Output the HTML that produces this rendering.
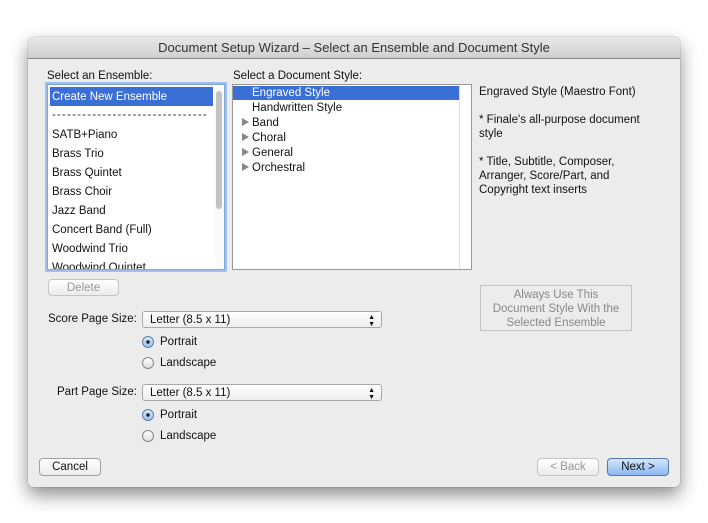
<!DOCTYPE html>
<html><head><style>
body{margin:0;width:708px;height:523px;background:#fff;font-family:"Liberation Sans",sans-serif;font-size:11.5px;color:#111;position:relative;overflow:hidden}
.win{position:absolute;left:28px;top:37px;width:652px;height:450px;background:#ececec;border-radius:5px;box-shadow:0 8px 18px rgba(0,0,0,.45),0 0 1px rgba(0,0,0,.5)}
.tb{position:absolute;left:0;top:0;width:652px;height:21px;background:linear-gradient(#e8e8e8,#d0d0d0);border-bottom:1px solid #888;border-radius:5px 5px 0 0;text-align:center;font-size:13px;line-height:21px;color:#333}
.a{position:absolute;white-space:nowrap}
.btn{position:absolute;background:linear-gradient(#fff,#ebebeb);border:1px solid #a0a0a0;border-radius:4px;text-align:center;box-sizing:border-box}
.radio{position:absolute;width:12px;height:12px;border:1px solid #888;border-radius:50%;background:linear-gradient(#fff,#ddd);box-sizing:border-box}
.radio.on{background:radial-gradient(circle,#222 0 1.6px,transparent 2px),linear-gradient(#d7e8fb,#9cc2ee);border-color:#5a7fb0}
.sel{position:absolute;height:17px;background:linear-gradient(#fff,#eee);border:1px solid #a8a8a8;border-radius:3px;box-sizing:border-box;line-height:16px;padding-left:7px}
.tri{position:absolute;width:0;height:0;border-left:7px solid #888;border-top:4.5px solid transparent;border-bottom:4.5px solid transparent}
</style></head><body>
<div class="win">
<div class="tb">Document Setup Wizard – Select an Ensemble and Document Style</div>
</div>
<div class="a" style="left:47px;top:70px">Select an Ensemble:</div>
<div class="a" style="left:233px;top:70px">Select a Document Style:</div>
<div class="a" style="left:47px;top:84px;width:178px;height:186px;background:#fff;border:1px solid #7fa6d8;box-shadow:0 0 0 2px #9ec0ea;box-sizing:border-box;overflow:hidden">
<div style="position:absolute;left:2px;top:2px;width:163px;height:19px;background:#3a6fd5"></div>
<div style="position:absolute;left:167px;top:2px;width:11px;height:182px;background:#fafafa"></div>
<div style="position:absolute;left:168px;top:6px;width:6px;height:118px;background:#c3c3c3;border-radius:3px"></div>
<div class="a" style="left:4px;top:6px;color:#fff">Create New Ensemble</div>
<div class="a" style="left:4px;top:24px;color:#333;letter-spacing:1.2px">-------------------------------</div>
<div class="a" style="left:4px;top:44px">SATB+Piano</div>
<div class="a" style="left:4px;top:63px">Brass Trio</div>
<div class="a" style="left:4px;top:82px">Brass Quintet</div>
<div class="a" style="left:4px;top:101px">Brass Choir</div>
<div class="a" style="left:4px;top:120px">Jazz Band</div>
<div class="a" style="left:4px;top:139px">Concert Band (Full)</div>
<div class="a" style="left:4px;top:158px">Woodwind Trio</div>
<div class="a" style="left:4px;top:177px">Woodwind Quintet</div>
</div>
<div class="a" style="left:232px;top:84px;width:240px;height:186px;background:#fff;border:1px solid #9a9a9a;box-sizing:border-box">
<div style="position:absolute;left:0;top:1px;width:226px;height:14px;background:#3a6fd5"></div>
<div style="position:absolute;left:226px;top:0;width:1px;height:184px;background:#ddd"></div>
<div class="a" style="left:19px;top:2px;color:#fff">Engraved Style</div>
<div class="a" style="left:19px;top:17px">Handwritten Style</div>
<div class="tri" style="left:9px;top:33px"></div><div class="a" style="left:19px;top:32px">Band</div>
<div class="tri" style="left:9px;top:48px"></div><div class="a" style="left:19px;top:47px">Choral</div>
<div class="tri" style="left:9px;top:63px"></div><div class="a" style="left:19px;top:62px">General</div>
<div class="tri" style="left:9px;top:78px"></div><div class="a" style="left:19px;top:77px">Orchestral</div>
</div>
<div class="a" style="left:479px;top:85px;line-height:14px;white-space:normal;width:180px">Engraved Style (Maestro Font)<br><br>* Finale's all-purpose document style<br><br>* Title, Subtitle, Composer, Arranger, Score/Part, and Copyright text inserts</div>
<div class="btn" style="left:48px;top:279px;width:71px;height:17px;line-height:16px;color:#999;border-color:#c4c4c4">Delete</div>
<div class="btn" style="left:480px;top:285px;width:152px;height:46px;border-radius:0;border-color:#c4c4c4;background:#ececec;color:#888;line-height:14px;padding-top:2px">Always Use This<br>Document Style With the<br>Selected Ensemble</div>
<div class="a" style="left:48px;top:313px">Score Page Size:</div>
<div class="sel" style="left:142px;top:311px;width:240px">Letter (8.5 x 11)<span style="position:absolute;right:6px;font-size:7px;line-height:7px;top:2px">▲<br>▼</span></div>
<div class="radio on" style="left:142px;top:336px"></div><div class="a" style="left:160px;top:336px">Portrait</div>
<div class="radio" style="left:142px;top:357px"></div><div class="a" style="left:160px;top:357px">Landscape</div>
<div class="a" style="left:57px;top:386px">Part Page Size:</div>
<div class="sel" style="left:142px;top:384px;width:240px">Letter (8.5 x 11)<span style="position:absolute;right:6px;font-size:7px;line-height:7px;top:2px">▲<br>▼</span></div>
<div class="radio on" style="left:142px;top:409px"></div><div class="a" style="left:160px;top:409px">Portrait</div>
<div class="radio" style="left:142px;top:430px"></div><div class="a" style="left:160px;top:430px">Landscape</div>
<div class="btn" style="left:39px;top:458px;width:62px;height:18px;line-height:16px">Cancel</div>
<div class="btn" style="left:537px;top:458px;width:62px;height:18px;line-height:16px;color:#999;border-color:#c4c4c4">&lt; Back</div>
<div class="btn" style="left:607px;top:458px;width:62px;height:18px;line-height:16px;background:linear-gradient(#d4e6fc,#8ab9f0);border-color:#5577aa">Next &gt;</div>
</body></html>
